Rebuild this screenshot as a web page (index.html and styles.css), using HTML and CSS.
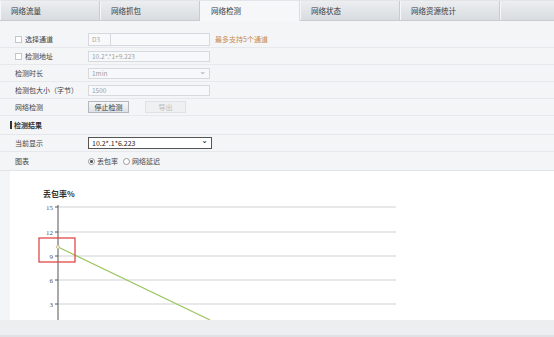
FILE: index.html
```html
<!DOCTYPE html>
<html>
<head>
  <title>网络检测</title>
  <link rel="stylesheet" href="styles.css">
</head>
<body>
  <!-- Onglets -->
  <div class="tabs">
    <div class="tab">网络流量</div>
    <div class="tab">网络抓包</div>
    <div class="tab active">网络检测</div>
    <div class="tab">网络状态</div>
    <div class="tab">网络资源统计</div>
    <div class="tab blank"></div>
  </div>

  <div class="panel">
    <div class="row">
      <label class="label"><span class="check"></span>选择通道</label>
      <div class="tag-input"><span class="tag">D3</span></div>
      <span class="hint">最多支持5个通道</span>
    </div>
    <div class="row">
      <label class="label"><span class="check"></span>检测地址</label>
      <div class="field disabled">10.2*.*1+9.223</div>
    </div>
    <div class="row">
      <label class="label">检测时长</label>
      <div class="field disabled select">1min<span class="chev">&#8964;</span></div>
    </div>
    <div class="row">
      <label class="label">检测包大小（字节）</label>
      <div class="field disabled">1500</div>
    </div>
    <div class="row">
      <label class="label">网络检测</label>
      <button class="btn">停止检测</button>
      <button class="btn off">导出</button>
    </div>

    <div class="row title"><span class="bar"></span>检测结果</div>

    <div class="row">
      <label class="label">当前显示</label>
      <div class="field current select">10.2*.1*6.223<span class="chev">&#8964;</span></div>
    </div>
    <div class="row tall">
      <label class="label">图表</label>
      <span class="radio on"></span><span class="opt">丢包率</span>
      <span class="radio"></span><span class="opt">网络延迟</span>
    </div>
  </div>

  <!-- Graphique -->
  <div class="chart-wrap">
    <div class="chart">
      <svg width="544" height="149" viewBox="0 0 544 149">
        <text x="33" y="26" class="ctitle">丢包率%</text>
        <g class="grid">
          <line x1="48" y1="36" x2="386" y2="36"/>
          <line x1="48" y1="61" x2="386" y2="61"/>
          <line x1="48" y1="85" x2="386" y2="85"/>
          <line x1="48" y1="109" x2="386" y2="109"/>
          <line x1="48" y1="133" x2="386" y2="133"/>
        </g>
        <g class="ticks">
          <line x1="45" y1="36" x2="48" y2="36"/>
          <line x1="45" y1="61" x2="48" y2="61"/>
          <line x1="45" y1="85" x2="48" y2="85"/>
          <line x1="45" y1="109" x2="48" y2="109"/>
          <line x1="45" y1="133" x2="48" y2="133"/>
          <line x1="48" y1="34" x2="48" y2="149"/>
        </g>
        <g class="ylab">
          <text x="43" y="38.5">15</text>
          <text x="43" y="63.5">12</text>
          <text x="43" y="87.5">9</text>
          <text x="43" y="111.5">6</text>
          <text x="43" y="135.5">3</text>
        </g>
        <line x1="48" y1="76" x2="200" y2="149" class="serie"/>
        <circle cx="48" cy="76" r="1.5" class="dot"/>
        <rect x="29" y="67" width="36" height="24" class="mark"/>
      </svg>
    </div>
  </div>
  <div class="foot"></div>
</body>
</html>
```

FILE: styles.css
```css
/* Styles CSS */
body {
  margin: 0;
  width: 554px;
  height: 337px;
  overflow: hidden;
  font-family: "Noto Sans CJK SC", "DejaVu Sans", sans-serif;
  font-size: 7px;
  color: #333;
  background-color: #eef0f2;
}

.tabs {
  display: flex;
  height: 19px;
  background: linear-gradient(#eceef0, #d8dce0);
  border-bottom: 1px solid #c9cdd2;
  border-top: 1px solid #e3e5e8;
}

.tab {
  width: 100px;
  box-sizing: border-box;
  padding-left: 10px;
  line-height: 19px;
  font-size: 7.5px;
  border-right: 1px solid #c8ccd1;
  border-left: 1px solid #f6f7f8;
  color: #3a3a3a;
}

.tab.active {
  background: #f6f7f9;
  margin-bottom: -1px;
  border-right: 1px solid #d8dbdf;
}

.tab.blank {
  flex: 1;
  border-right: none;
}

.panel {
  background-color: #f4f5f7;
  padding-top: 10px;
}

.row {
  display: flex;
  align-items: center;
  height: 16px;
  padding-left: 15px;
  border-bottom: 1px solid #e6e8eb;
}

.row.tall {
  height: 18px;
  border-bottom: 1px solid #e2e4e7;
}

.label {
  width: 73px;
  display: flex;
  align-items: center;
  color: #444;
}

.check {
  width: 5px;
  height: 5px;
  border: 1px solid #c4c7cc;
  background: #fff;
  margin-right: 3px;
}

.tag-input {
  width: 122px;
  height: 13px;
  box-sizing: border-box;
  border: 1px solid #d6d9dd;
  background: #f8f9fa;
  display: flex;
  align-items: center;
}

.tag {
  width: 22px;
  padding-left: 3px;
  box-sizing: border-box;
  border-right: 1px solid #d6d9dd;
  height: 100%;
  line-height: 11px;
  font-size: 6.5px;
  color: #aaa;
}

.hint {
  margin-left: 5px;
  color: #c98a4a;
}

.field {
  width: 122px;
  height: 11px;
  box-sizing: border-box;
  border: 1px solid #d6d9dd;
  padding-left: 3px;
  line-height: 9px;
  font-size: 6.5px;
  position: relative;
}

.field.disabled {
  background: #f7f8f9;
  color: #a0a0a0;
}

.field.current {
  width: 124px;
  height: 12px;
  line-height: 10px;
  background: #fff;
  border-color: #555;
  color: #222;
  font-size: 7px;
}

.chev {
  position: absolute;
  right: 3px;
  top: -3px;
  font-size: 8px;
}

.btn {
  font-family: inherit;
  font-size: 7px;
  height: 12px;
  width: 41px;
  padding: 0;
  margin: 0 16px 0 0;
  border: 1px solid #b4b8bd;
  background: linear-gradient(#f5f6f7, #dfe2e5);
  color: #333;
  line-height: 10px;
}

.btn.off {
  color: #bbb;
  border-color: #dfe1e4;
  background: #eef0f2;
}

.row.title {
  padding-left: 10px;
  font-weight: bold;
  color: #333;
  height: 18px;
  border-bottom: 1px solid #e4e6e9;
}

.bar {
  width: 2px;
  height: 8px;
  background: #333;
  margin-right: 2px;
}

.radio {
  width: 5px;
  height: 5px;
  border-radius: 50%;
  border: 1px solid #999;
  background: #fff;
  margin: 0 2px 0 0;
}

.radio.on {
  background: radial-gradient(circle, #555 1.3px, #fff 1.6px);
}

.opt {
  margin-right: 5px;
  color: #444;
}

.chart-wrap {
  background: #f4f5f7;
  padding-left: 10px;
}

.chart {
  background: #fff;
  height: 149px;
}

.chart svg {
  display: block;
  font-family: "Noto Sans CJK SC", "Liberation Sans", sans-serif;
}

.ctitle {
  font-size: 8px;
  font-weight: bold;
  fill: #333;
}

.grid line {
  stroke: #cfd1d4;
  stroke-width: 1;
}

.ticks line {
  stroke: #555;
  stroke-width: 1;
}

.ylab text {
  font-size: 7px;
  fill: #555;
  text-anchor: end;
  font-family: "Liberation Serif", serif;
}

.serie {
  stroke: #9cc55f;
  stroke-width: 1.2;
}

.dot {
  fill: #fff;
  stroke: #c8b98a;
  stroke-width: 1;
}

.mark {
  fill: none;
  stroke: #e03a3a;
  stroke-width: 1.2;
}

.foot {
  height: 17px;
  background: #eceef0;
  border-bottom: 2px solid #dfe1e4;
  box-sizing: border-box;
}
```
